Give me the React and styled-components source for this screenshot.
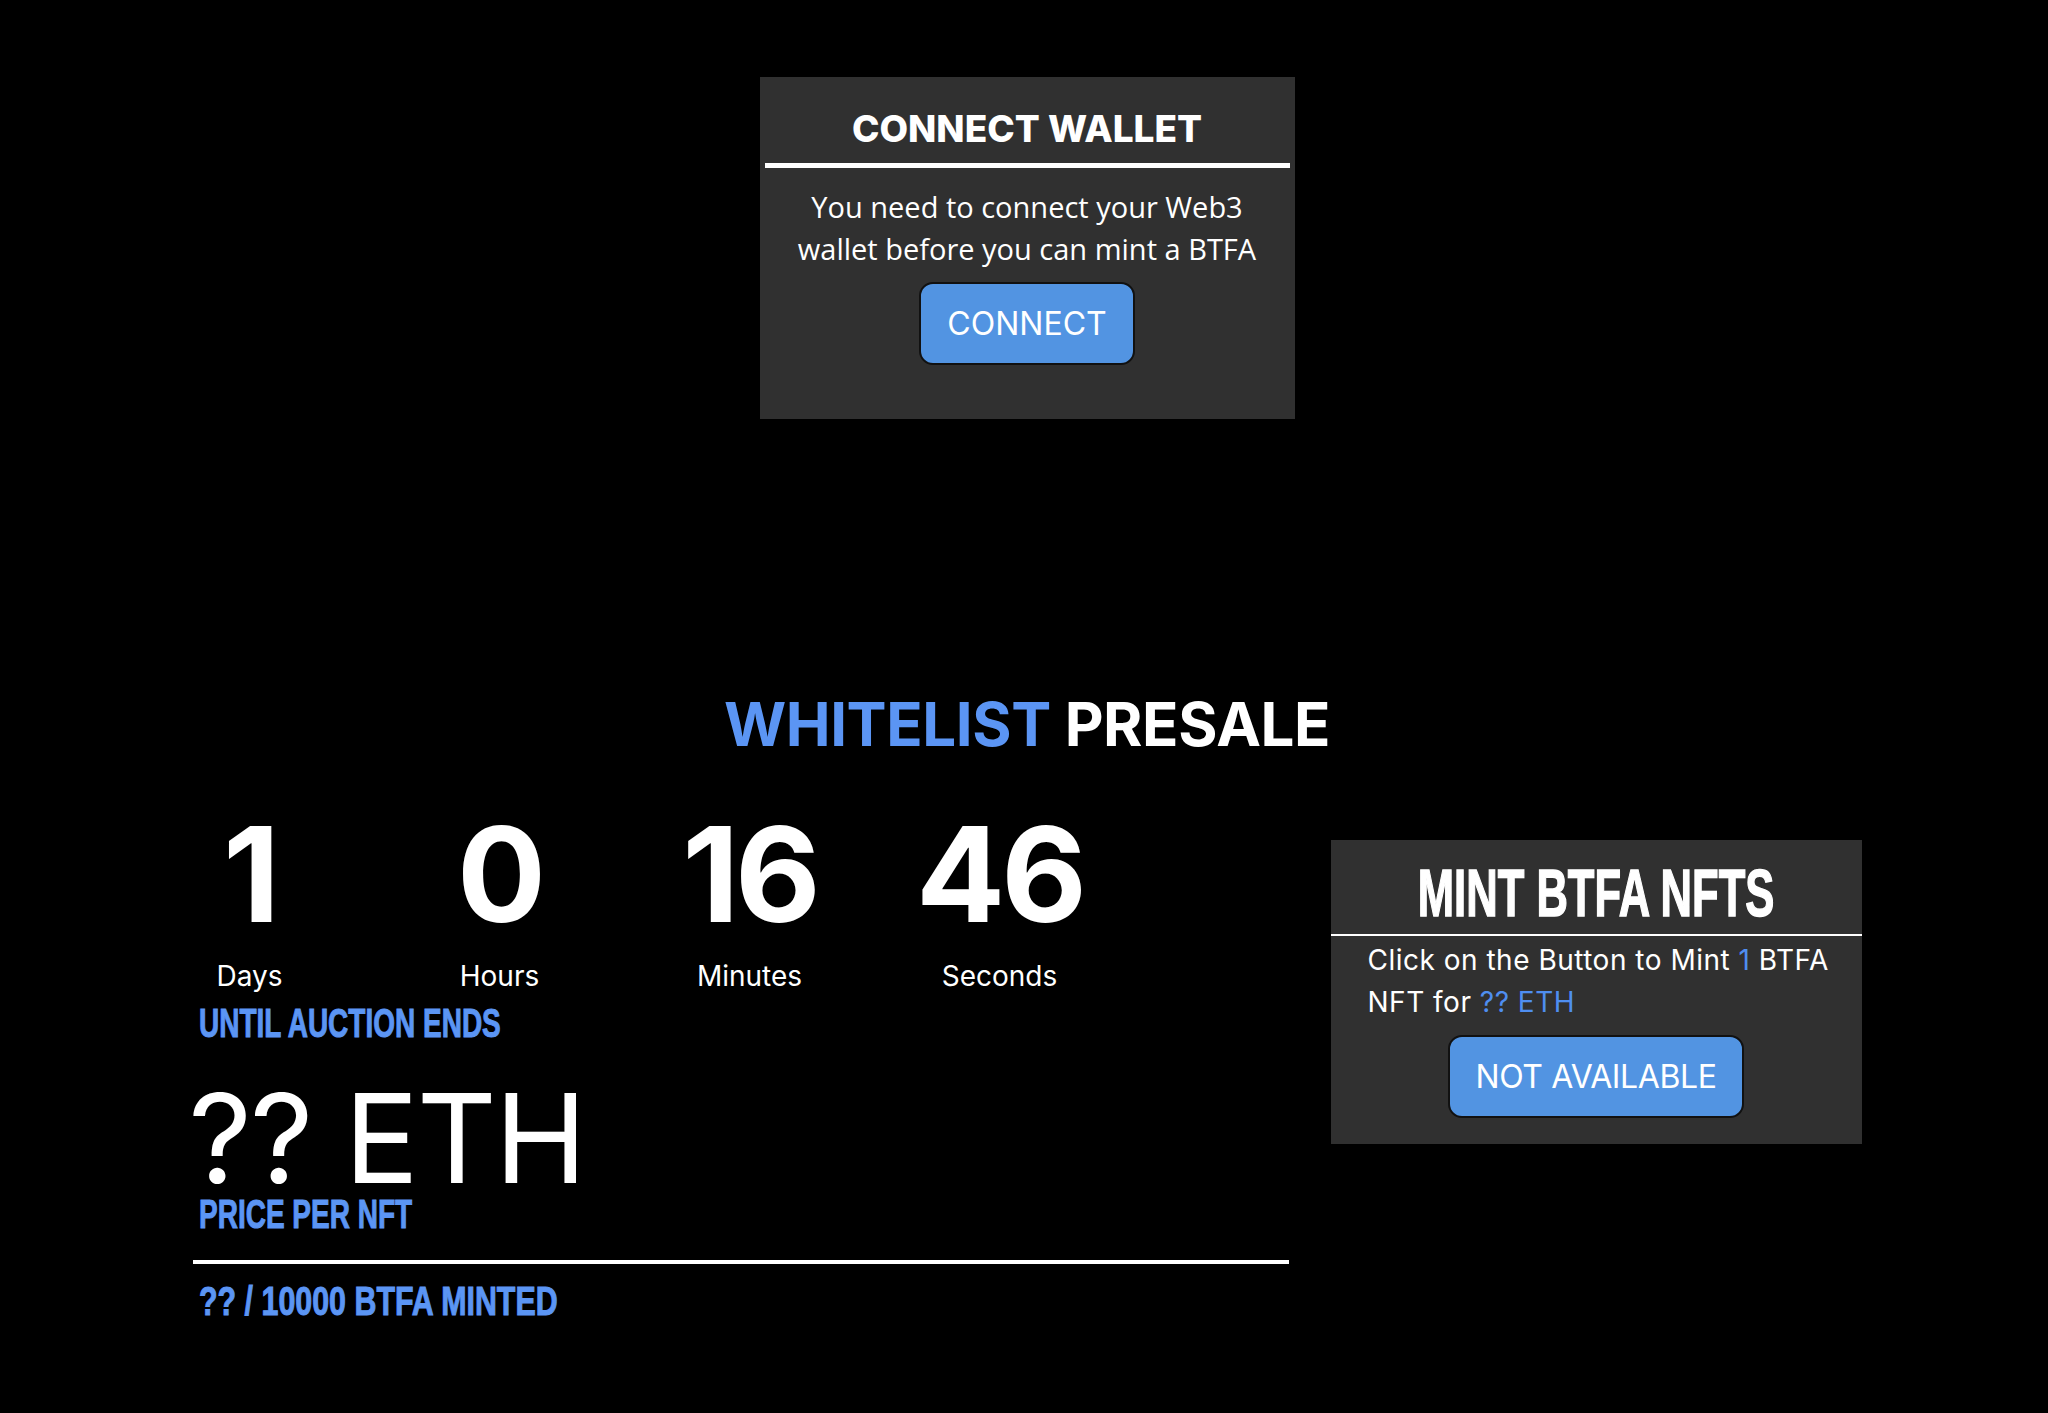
import React from "react";
import styled, { createGlobalStyle } from "styled-components";

const BLUE = "#5b95f4";
const BUTTON_BLUE = "#5294e2";
const CARD_BG = "#303030";

const GlobalStyle = createGlobalStyle`
  html, body {
    margin: 0;
    padding: 0;
    background: #000;
  }
  body {
    font-family: Inter, "Noto Sans", sans-serif;
    color: #fff;
  }
`;

const Page = styled.main`
  min-height: 1413px;
  box-sizing: border-box;
  padding: 77px 0 0 6px;
  display: flex;
  flex-direction: column;
  align-items: center;
`;

const WalletCard = styled.section`
  width: 535px;
  box-sizing: border-box;
  background: ${CARD_BG};
  padding: 30px 5px 54px;
  display: flex;
  flex-direction: column;
  align-items: center;
`;

const WalletTitle = styled.h2`
  margin: 0;
  font: 800 37px/44px Inter, sans-serif;
  text-align: center;
`;

// white divider line, thickness and spacing vary per card
const Rule = styled.div`
  align-self: stretch;
  height: ${(props) => props.$size}px;
  margin-top: ${(props) => props.$top}px;
  background: #fff;
`;

const WalletText = styled.p`
  margin: 18px 0 12px;
  max-width: 470px;
  font: 400 29px/42px "Open Sans", sans-serif;
  text-align: center;
`;

const ActionButton = styled.button`
  font: 400 32px/34px Inter, sans-serif;
  letter-spacing: ${(props) => props.$spacing || 0}px;
  color: #fff;
  background: ${BUTTON_BLUE};
  border: 2px solid #111;
  border-radius: 14px;
  padding: 23px 26px 22px;
  margin-top: ${(props) => props.$top || 0}px;
  cursor: pointer;
`;

const Heading = styled.h1`
  margin: 269px 0 0;
  font: 700 60px/72px Inter, sans-serif;
  letter-spacing: -0.4px;
  text-align: center;
  color: #fff;
`;

const Accent = styled.span`
  color: ${(props) => props.$color || BLUE};
`;

const SaleRow = styled.div`
  width: 1669px;
  margin-top: 48px;
  display: flex;
  align-items: flex-start;
  gap: 42px;
`;

const LeftColumn = styled.div`
  width: 1096px;
  display: flex;
  flex-direction: column;
`;

const Countdown = styled.div`
  display: flex;
  gap: 136px;
`;

const Unit = styled.div`
  width: 114px;
  display: flex;
  flex-direction: column;
  align-items: center;
`;

const UnitValue = styled.div`
  font: 700 132px/132px Inter, sans-serif;
  letter-spacing: -4px;
`;

const UnitLabel = styled.div`
  margin-top: 19px;
  font: 400 28px/34px Inter, sans-serif;
  white-space: nowrap;
`;

// stands in for a condensed display face (Oswald-like)
const Condensed = styled.div`
  margin-top: ${(props) => props.$top || 0}px;
  margin-left: ${(props) => (props.$center ? 0 : 6)}px;
  font: 700 ${(props) => props.$size}px / ${(props) => props.$size}px
    "Liberation Sans", Arial, sans-serif;
  color: ${(props) => props.$color || BLUE};
  -webkit-text-stroke: ${(props) => props.$stroke || 1}px
    ${(props) => props.$color || BLUE};
  text-align: ${(props) => (props.$center ? "center" : "left")};
  white-space: nowrap;
  transform: scaleX(${(props) => props.$scale});
  transform-origin: ${(props) => (props.$center ? "center" : "left")} center;
`;

const PriceValue = styled.div`
  margin: 40px 0 0 -4px;
  font: 400 124px/110px Inter, sans-serif;
  letter-spacing: -2px;
  white-space: nowrap;
`;

const Divider = styled.div`
  height: 4px;
  margin-top: 26px;
  background: #fff;
`;

const MintCard = styled.section`
  width: 531px;
  box-sizing: border-box;
  margin-top: 32px;
  background: ${CARD_BG};
  padding: 20px 0 26px;
  display: flex;
  flex-direction: column;
  align-items: center;
`;

const MintText = styled.p`
  align-self: stretch;
  margin: 3px 0 0;
  padding: 0 20px 0 37px;
  font: 400 28px/42px Inter, sans-serif;
  letter-spacing: 0.5px;
  text-align: left;
`;

const units = [
  { value: "1", label: "Days" },
  { value: "0", label: "Hours" },
  { value: "16", label: "Minutes" },
  { value: "46", label: "Seconds" },
];

export default function App() {
  return (
    <>
      <GlobalStyle />
      <Page>
        <WalletCard>
          <WalletTitle>CONNECT WALLET</WalletTitle>
          <Rule $size={5} $top={12} />
          <WalletText>
            You need to connect your Web3 wallet before you can mint a BTFA
          </WalletText>
          <ActionButton>CONNECT</ActionButton>
        </WalletCard>

        <Heading>
          <Accent>WHITELIST</Accent> PRESALE
        </Heading>

        <SaleRow>
          <LeftColumn>
            <Countdown>
              {units.map((u) => (
                <Unit key={u.label}>
                  <UnitValue>{u.value}</UnitValue>
                  <UnitLabel>{u.label}</UnitLabel>
                </Unit>
              ))}
            </Countdown>
            <Condensed $size={40} $scale={0.7} $top={10}>
              UNTIL AUCTION ENDS
            </Condensed>
            <PriceValue>?? ETH</PriceValue>
            <Condensed $size={40} $scale={0.7} $top={1}>
              PRICE PER NFT
            </Condensed>
            <Divider />
            <Condensed $size={40} $scale={0.76} $top={17}>
              ?? / 10000 BTFA MINTED
            </Condensed>
          </LeftColumn>

          <MintCard>
            <Condensed
              $size={66}
              $scale={0.66}
              $stroke={1.5}
              $color="#fff"
              $center
            >
              MINT BTFA NFTS
            </Condensed>
            <Rule $size={2} $top={8} />
            <MintText>
              Click on the Button to Mint <Accent $color="#4f8ef0">1</Accent>{" "}
              BTFA NFT for <Accent $color="#4f8ef0">?? ETH</Accent>
            </MintText>
            <ActionButton $top={12} $spacing={-0.4}>
              NOT AVAILABLE
            </ActionButton>
          </MintCard>
        </SaleRow>
      </Page>
    </>
  );
}
